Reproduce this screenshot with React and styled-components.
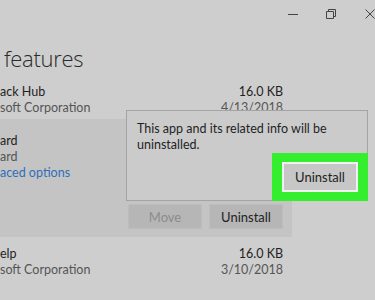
import React from "react";
import styled, { createGlobalStyle } from "styled-components";

const GlobalStyle = createGlobalStyle`
  * { box-sizing: border-box; }
  body {
    margin: 0;
    padding: 0;
    background: #cecece;
    font-family: Lato, 'Open Sans', sans-serif;
    color: #1f1f1f;
    overflow: hidden;
  }
`;

const Screen = styled.main`
  position: relative;
  width: 375px;
  height: 300px;
  overflow: hidden;
  background: #cecece;
`;

const TitleBar = styled.header`
  display: flex;
  justify-content: flex-end;
  align-items: center;
  height: 28px;
  margin-right: -13px;
`;

const WindowButton = styled.div`
  width: ${(p) => p.$w || 37}px;
  height: 28px;
  display: flex;
  align-items: center;
  justify-content: center;
`;

const Title = styled.h1`
  margin: 13px 0 0 4px;
  font-family: 'Open Sans', sans-serif;
  font-size: 22px;
  letter-spacing: -0.3px;
  line-height: 34px;
  font-weight: 300;
  color: #2a2a2a;
`;

const List = styled.section`
  display: flex;
  flex-direction: column;
  margin-top: 9px;
  width: 292px;
`;

const Row = styled.div`
  display: flex;
  flex-direction: column;
  padding: ${(p) => p.$pad || "0"};
  padding-right: 9px;
  background: ${(p) => (p.$selected ? "#c4c4c4" : "transparent")};
`;

const Line = styled.div`
  display: flex;
  justify-content: space-between;
  font-size: 12.5px;
  line-height: 16px;
  white-space: nowrap;
  color: ${(p) => p.$color || "#1f1f1f"};
`;

const Link = styled.span`
  color: #2f6fb8;
`;

const Actions = styled.div`
  display: flex;
  justify-content: flex-end;
  gap: 7px;
  margin-top: 23px;
`;

const Button = styled.button`
  width: 74px;
  height: 25px;
  border: 1px solid #bdbdbd;
  background: #b6b6b6;
  font-family: inherit;
  font-size: 13px;
  color: ${(p) => (p.disabled ? "#8c8c8c" : "#222")};
  padding: 0;
`;

const Flyout = styled.div`
  position: absolute;
  left: 126px;
  top: 110px;
  width: 242px;
  height: 91px;
  border: 1px solid #a4a4a4;
  background: #cbcbcb;
  display: flex;
  flex-direction: column;
  justify-content: space-between;
`;

const FlyoutText = styled.p`
  margin: 10px 0 0 10px;
  font-size: 12.5px;
  line-height: 16px;
  color: #1f1f1f;
`;

const FlyoutFooter = styled.div`
  display: flex;
  justify-content: flex-end;
  margin: 0 -1px -1px 0;
`;

const Highlight = styled.div`
  padding: 9px 10px;
  background: #35ef2f;
`;

const ConfirmButton = styled.button`
  width: 76px;
  height: 30px;
  border: 2px solid #f2f2f2;
  background: #c7c7c7;
  font-family: inherit;
  font-size: 13px;
  color: #222;
  padding: 0;
`;

export default function App() {
  return (
    <>
      <GlobalStyle />
      <Screen>
        <TitleBar>
          <WindowButton $w={34}>
            <svg width="10" height="10" viewBox="0 0 10 10">
              <path d="M0 5.5h10" stroke="#444" strokeWidth="1" />
            </svg>
          </WindowButton>
          <WindowButton $w={41}>
            <svg width="10" height="10" viewBox="0 0 10 10" fill="none">
              <path d="M0.5 2.5h7v7h-7z M2.5 2.5v-2h7v7h-2" stroke="#444" strokeWidth="1" />
            </svg>
          </WindowButton>
          <WindowButton $w={37}>
            <svg width="10" height="10" viewBox="0 0 10 10">
              <path d="M0.5 0.5l9 9M9.5 0.5l-9 9" stroke="#444" strokeWidth="1" />
            </svg>
          </WindowButton>
        </TitleBar>
        <Title>features</Title>
        <List>
          <Row $pad="0 0 3px">
            <Line>
              <span>ack Hub</span>
              <span>16.0 KB</span>
            </Line>
            <Line $color="#555">
              <span>soft Corporation</span>
              <span>4/13/2018</span>
            </Line>
          </Row>
          <Row $selected $pad="14px 0 8px">
            <Line>
              <span>ard</span>
            </Line>
            <Line $color="#555">
              <span>ard</span>
            </Line>
            <Line>
              <Link>aced options</Link>
            </Line>
            <Actions>
              <Button disabled>Move</Button>
              <Button>Uninstall</Button>
            </Actions>
          </Row>
          <Row $pad="9px 0 0">
            <Line>
              <span>elp</span>
              <span>16.0 KB</span>
            </Line>
            <Line $color="#555">
              <span>soft Corporation</span>
              <span>3/10/2018</span>
            </Line>
          </Row>
        </List>
        <Flyout>
          <FlyoutText>
            This app and its related info will be
            <br />
            uninstalled.
          </FlyoutText>
          <FlyoutFooter>
            <Highlight>
              <ConfirmButton>Uninstall</ConfirmButton>
            </Highlight>
          </FlyoutFooter>
        </Flyout>
      </Screen>
    </>
  );
}
